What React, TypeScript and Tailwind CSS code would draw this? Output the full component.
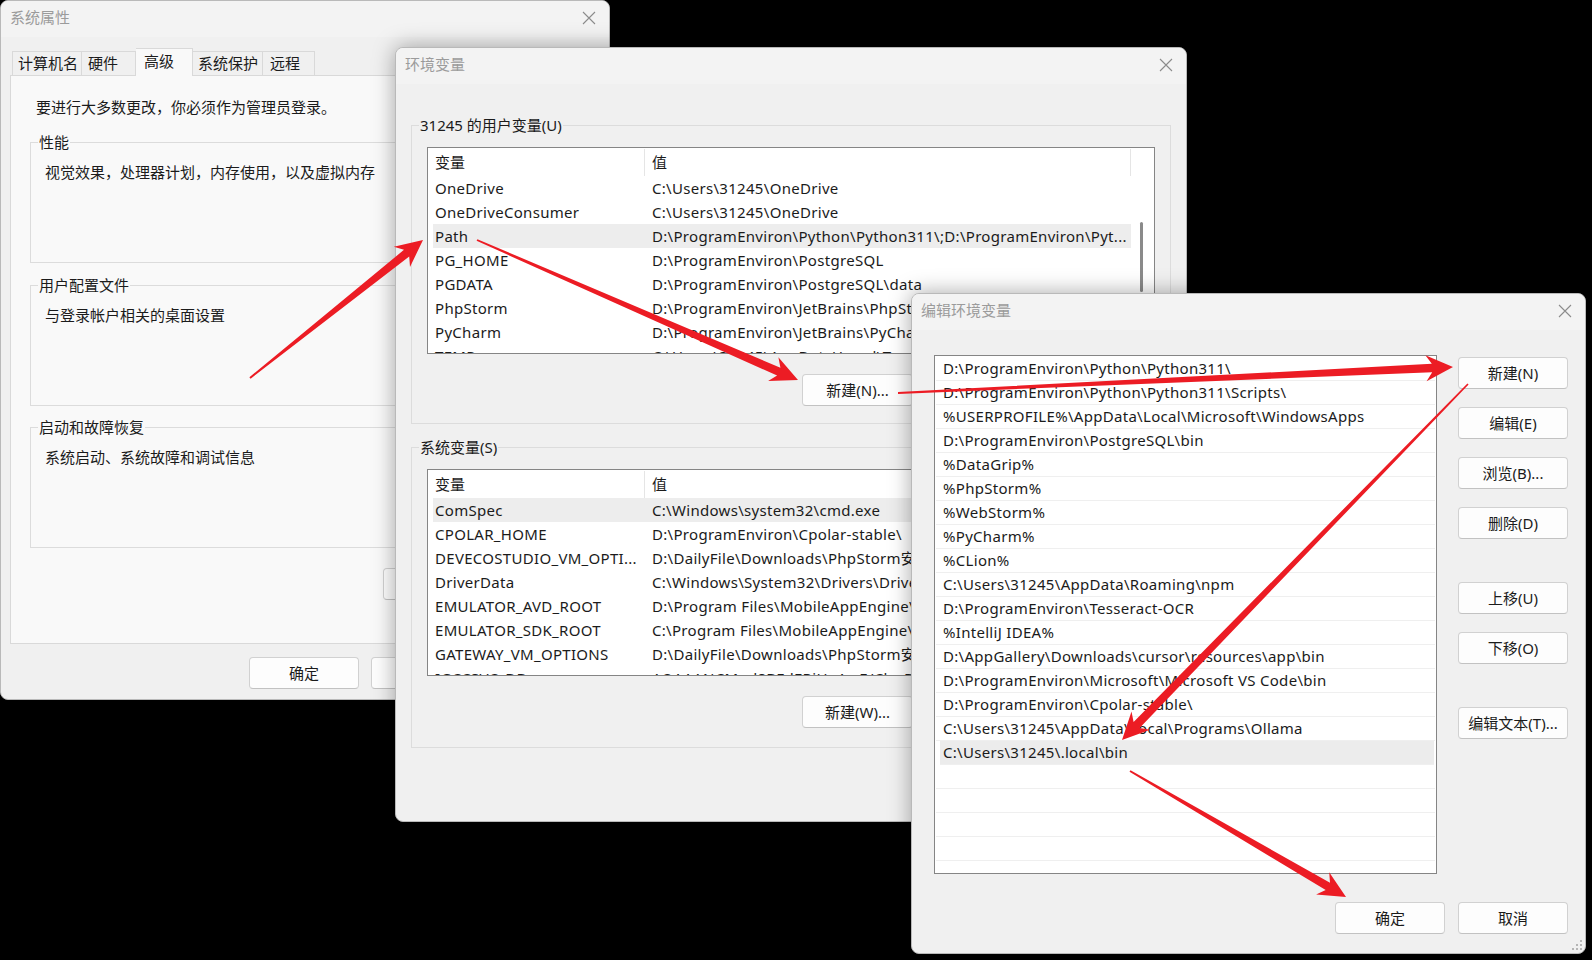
import React from "react";

type Row = [string, string];

const userVars: Row[] = [
  ["OneDrive", "C:\\Users\\31245\\OneDrive"],
  ["OneDriveConsumer", "C:\\Users\\31245\\OneDrive"],
  ["Path", "D:\\ProgramEnviron\\Python\\Python311\\;D:\\ProgramEnviron\\Pyt..."],
  ["PG_HOME", "D:\\ProgramEnviron\\PostgreSQL"],
  ["PGDATA", "D:\\ProgramEnviron\\PostgreSQL\\data"],
  ["PhpStorm", "D:\\ProgramEnviron\\JetBrains\\PhpStorm 2024.1\\bin;"],
  ["PyCharm", "D:\\ProgramEnviron\\JetBrains\\PyCharm 2024.1\\bin;"],
  ["TEMP", "C:\\Users\\31245\\AppData\\Local\\Temp"],
];

const systemVars: Row[] = [
  ["ComSpec", "C:\\Windows\\system32\\cmd.exe"],
  ["CPOLAR_HOME", "D:\\ProgramEnviron\\Cpolar-stable\\"],
  ["DEVECOSTUDIO_VM_OPTI...", "D:\\DailyFile\\Downloads\\PhpStorm安装包\\jetbra\\vmoptions\\devecostudio.vmoptions"],
  ["DriverData", "C:\\Windows\\System32\\Drivers\\DriverData"],
  ["EMULATOR_AVD_ROOT", "D:\\Program Files\\MobileAppEngine\\avd"],
  ["EMULATOR_SDK_ROOT", "C:\\Program Files\\MobileAppEngine\\sdk"],
  ["GATEWAY_VM_OPTIONS", "D:\\DailyFile\\Downloads\\PhpStorm安装包\\jetbra\\vmoptions\\gateway.vmoptions"],
  ["IGCCSVC_DB", "AQAAANCMnd8BFdERjHoAwE/Cl+sBAAAA"],
];

const pathEntries = [
  "D:\\ProgramEnviron\\Python\\Python311\\",
  "D:\\ProgramEnviron\\Python\\Python311\\Scripts\\",
  "%USERPROFILE%\\AppData\\Local\\Microsoft\\WindowsApps",
  "D:\\ProgramEnviron\\PostgreSQL\\bin",
  "%DataGrip%",
  "%PhpStorm%",
  "%WebStorm%",
  "%PyCharm%",
  "%CLion%",
  "C:\\Users\\31245\\AppData\\Roaming\\npm",
  "D:\\ProgramEnviron\\Tesseract-OCR",
  "%IntelliJ IDEA%",
  "D:\\AppGallery\\Downloads\\cursor\\resources\\app\\bin",
  "D:\\ProgramEnviron\\Microsoft\\Microsoft VS Code\\bin",
  "D:\\ProgramEnviron\\Cpolar-stable\\",
  "C:\\Users\\31245\\AppData\\Local\\Programs\\Ollama",
  "C:\\Users\\31245\\.local\\bin",
  "",
  "",
  "",
  "",
];

const CloseIcon = () => (
  <svg width="14" height="14" viewBox="0 0 14 14" fill="none" stroke="#8c8c8c" strokeWidth="1.1">
    <path d="M1 1L13 13M13 1L1 13" />
  </svg>
);

const Btn = ({ children, className = "" }: { children: React.ReactNode; className?: string }) => (
  <div
    className={`flex h-[32px] shrink-0 items-center justify-center rounded-[4px] border border-[#d1d1d1] border-b-[#c2c2c2] bg-[#fdfdfd] text-[15px] text-[#1b1b1b] ${className}`}
  >
    {children}
  </div>
);

const Window = ({
  title,
  className,
  children,
}: {
  title: string;
  className: string;
  children: React.ReactNode;
}) => (
  <div
    className={`absolute flex flex-col overflow-hidden rounded-[8px] border border-[#b9b9b9] bg-[#f0f0f0] shadow-[0_0_22px_rgba(0,0,0,0.35)] ${className}`}
  >
    <div className="flex h-[36px] shrink-0 items-center justify-between bg-[#f3f3f3] pb-[3px] pl-[9px] pr-[13px]">
      <span className="text-[15px] text-[#9b9b9b]">{title}</span>
      <CloseIcon />
    </div>
    {children}
  </div>
);

// group box with its caption sitting on the top border
const Group = ({
  label,
  bg,
  className,
  children,
}: {
  label: string;
  bg: string;
  className: string;
  children?: React.ReactNode;
}) => (
  <div className={`relative shrink-0 border border-[#dcdcdc] ${className}`}>
    <span className={`absolute -top-[11px] left-[7px] px-[1px] text-[15px] leading-[20px] text-[#1b1b1b] ${bg}`}>
      {label}
    </span>
    {children}
  </div>
);

const VarList = ({ rows, selected, scrollbar }: { rows: Row[]; selected: number; scrollbar?: boolean }) => (
  <div className="flex h-[207px] w-[728px] overflow-hidden border border-[#858585] bg-white">
    <div className="w-[703px] shrink-0 overflow-hidden pl-[5px]">
      <div className="flex h-[28px] items-center pt-[1px] text-[15px] text-[#1b1b1b]">
        <div className="flex h-full w-[212px] shrink-0 items-center border-r border-[#e5e5e5] pl-[2px]">变量</div>
        <div className="flex h-full flex-1 items-center border-r border-[#e5e5e5] pl-[7px]">值</div>
      </div>
      {rows.map(([name, value], i) => (
        <div
          key={name}
          className={`flex h-[24px] items-center whitespace-nowrap text-[15px] leading-[24px] tracking-[0.3px] text-[#1b1b1b] ${
            i === selected ? "bg-[#ededed]" : ""
          }`}
        >
          <div className="w-[212px] shrink-0 overflow-hidden pl-[2px]">{name}</div>
          <div className="overflow-hidden pl-[7px]">{value}</div>
        </div>
      ))}
    </div>
    <div className="relative flex-1">
      {scrollbar && <div className="absolute left-[9px] top-[74px] h-[70px] w-[3px] rounded-full bg-[#8a8a8a]" />}
    </div>
  </div>
);

const arrowPoints = (x1: number, y1: number, x2: number, y2: number) => {
  const headLen = 27;
  const headHalf = 13;
  const notch = 6;
  const tail = 0.9;
  const neck = 4.2;
  const len = Math.hypot(x2 - x1, y2 - y1);
  const ux = (x2 - x1) / len;
  const uy = (y2 - y1) / len;
  const nx = -uy;
  const ny = ux;
  const bx = x2 - ux * headLen;
  const by = y2 - uy * headLen;
  const jx = x2 - ux * (headLen - notch);
  const jy = y2 - uy * (headLen - notch);
  const pts = [
    [x1 + nx * tail, y1 + ny * tail],
    [jx + nx * neck, jy + ny * neck],
    [bx + nx * headHalf, by + ny * headHalf],
    [x2, y2],
    [bx - nx * headHalf, by - ny * headHalf],
    [jx - nx * neck, jy - ny * neck],
    [x1 - nx * tail, y1 - ny * tail],
  ];
  return pts.map((p) => `${p[0].toFixed(1)},${p[1].toFixed(1)}`).join(" ");
};

const arrows = [
  [250, 378, 423, 240],
  [477, 240, 798, 380],
  [898, 393, 1453, 367],
  [1468, 384, 1122, 740],
  [1130, 771, 1346, 897],
];

export default function App() {
  return (
    <div className="relative h-[960px] w-[1592px] overflow-hidden bg-black font-['Noto_Sans','Noto_Sans_CJK_SC',sans-serif]">
      {/* 系统属性 */}
      <Window title="系统属性" className="left-0 top-0 h-[700px] w-[610px]">
        <div className="flex flex-col px-[9px] pt-[11px]">
          <div className="relative z-10 flex h-[27px] items-end pl-[2px] text-[15px] text-[#1b1b1b]">
            <div className="flex h-[24px] w-[70px] items-center border border-b-0 border-[#d9d9d9] pl-[5px]">计算机名</div>
            <div className="flex h-[24px] w-[54px] items-center border border-b-0 border-l-0 border-[#d9d9d9] pl-[6px]">硬件</div>
            <div className="-mb-px flex h-[28px] w-[57px] items-start border border-b-0 border-l-0 border-[#d9d9d9] bg-[#f9f9f9] pl-[8px] pt-[1px]">高级</div>
            <div className="flex h-[24px] w-[70px] items-center border border-b-0 border-l-0 border-[#d9d9d9] pl-[5px]">系统保护</div>
            <div className="flex h-[24px] w-[52px] items-center border border-b-0 border-l-0 border-[#d9d9d9] pl-[7px]">远程</div>
          </div>
          <div className="flex h-[569px] flex-col border border-[#d9d9d9] bg-[#f9f9f9] px-[19px] pt-[21px] text-[15px] text-[#1b1b1b]">
            <div className="ml-[6px] h-[20px] leading-[20px]">要进行大多数更改，你必须作为管理员登录。</div>
            <Group label="性能" bg="bg-[#f9f9f9]" className="mt-[25px] h-[121px] pl-[14px] pt-[19px]">
              <div className="leading-[20px]">视觉效果，处理器计划，内存使用，以及虚拟内存</div>
            </Group>
            <Group label="用户配置文件" bg="bg-[#f9f9f9]" className="mt-[22px] h-[121px] pl-[14px] pt-[19px]">
              <div className="leading-[20px]">与登录帐户相关的桌面设置</div>
            </Group>
            <Group label="启动和故障恢复" bg="bg-[#f9f9f9]" className="mt-[21px] h-[121px] pl-[14px] pt-[19px]">
              <div className="leading-[20px]">系统启动、系统故障和调试信息</div>
            </Group>
            <Btn className="ml-[353px] mt-[20px] w-[140px]">环境变量(N)...</Btn>
          </div>
          <div className="ml-[239px] mt-[13px] flex gap-[12px]">
            <Btn className="w-[110px]">确定</Btn>
            <Btn className="w-[110px]">取消</Btn>
            <Btn className="w-[110px]">应用(A)</Btn>
          </div>
        </div>
      </Window>

      {/* 环境变量 */}
      <Window title="环境变量" className="left-[395px] top-[47px] h-[775px] w-[792px]">
        <div className="flex flex-col px-[15px] pt-[41px]">
          <Group label="31245 的用户变量(U)" bg="bg-[#f0f0f0]" className="h-[299px] w-[760px] pl-[15px] pt-[21px]">
            <VarList rows={userVars} selected={2} scrollbar />
            <div className="mt-[20px] flex justify-end gap-[10px] pr-[15px]">
              <Btn className="w-[111px]">新建(N)...</Btn>
              <Btn className="w-[111px]">编辑(E)...</Btn>
              <Btn className="w-[111px]">删除(D)</Btn>
            </div>
          </Group>
          <Group label="系统变量(S)" bg="bg-[#f0f0f0]" className="mt-[23px] h-[301px] w-[760px] pl-[15px] pt-[21px]">
            <VarList rows={systemVars} selected={0} />
            <div className="mt-[20px] flex justify-end gap-[10px] pr-[15px]">
              <Btn className="w-[111px]">新建(W)...</Btn>
              <Btn className="w-[111px]">编辑(I)...</Btn>
              <Btn className="w-[111px]">删除(L)</Btn>
            </div>
          </Group>
          <div className="mt-[20px] flex justify-end gap-[12px]">
            <Btn className="w-[110px]">确定</Btn>
            <Btn className="w-[110px]">取消</Btn>
          </div>
        </div>
      </Window>

      {/* 编辑环境变量 */}
      <Window title="编辑环境变量" className="left-[911px] top-[293px] h-[661px] w-[675px]">
        <div className="flex flex-col pl-[22px] pt-[25px]">
          <div className="flex">
            <div className="h-[519px] w-[503px] shrink-0 border border-[#858585] bg-white px-[1px] pt-[1px]">
              {pathEntries.map((p, i) => (
                <div
                  key={i}
                  className={`h-[24px] whitespace-nowrap border-b border-[#efefef] text-[15px] leading-[23px] tracking-[0.3px] text-[#1b1b1b] ${
                    i === 16 ? "ml-[4px] mr-[1px] bg-[#ececec] pl-[3px]" : "pl-[7px]"
                  }`}
                >
                  {p}
                </div>
              ))}
            </div>
            <div className="ml-[21px] mt-[2px] flex flex-col">
              <Btn className="w-[110px]">新建(N)</Btn>
              <Btn className="mt-[18px] w-[110px]">编辑(E)</Btn>
              <Btn className="mt-[18px] w-[110px]">浏览(B)...</Btn>
              <Btn className="mt-[18px] w-[110px]">删除(D)</Btn>
              <Btn className="mt-[43px] w-[110px]">上移(U)</Btn>
              <Btn className="mt-[18px] w-[110px]">下移(O)</Btn>
              <Btn className="mt-[43px] w-[110px]">编辑文本(T)...</Btn>
            </div>
          </div>
          <div className="mt-[28px] flex justify-end gap-[13px] pr-[17px]">
            <Btn className="w-[110px]">确定</Btn>
            <Btn className="w-[110px]">取消</Btn>
          </div>
        </div>
        <svg className="absolute bottom-[3px] right-[3px]" width="10" height="10" viewBox="0 0 10 10" fill="#b5b5b5">
          <rect x="8" y="0" width="2" height="2" />
          <rect x="4" y="4" width="2" height="2" />
          <rect x="8" y="4" width="2" height="2" />
          <rect x="0" y="8" width="2" height="2" />
          <rect x="4" y="8" width="2" height="2" />
          <rect x="8" y="8" width="2" height="2" />
        </svg>
      </Window>

      {/* red annotation arrows */}
      <svg className="pointer-events-none absolute inset-0 z-50" width="1592" height="960">
        {arrows.map(([x1, y1, x2, y2], i) => (
          <polygon key={i} points={arrowPoints(x1, y1, x2, y2)} fill="#ec1c24" />
        ))}
      </svg>
    </div>
  );
}
